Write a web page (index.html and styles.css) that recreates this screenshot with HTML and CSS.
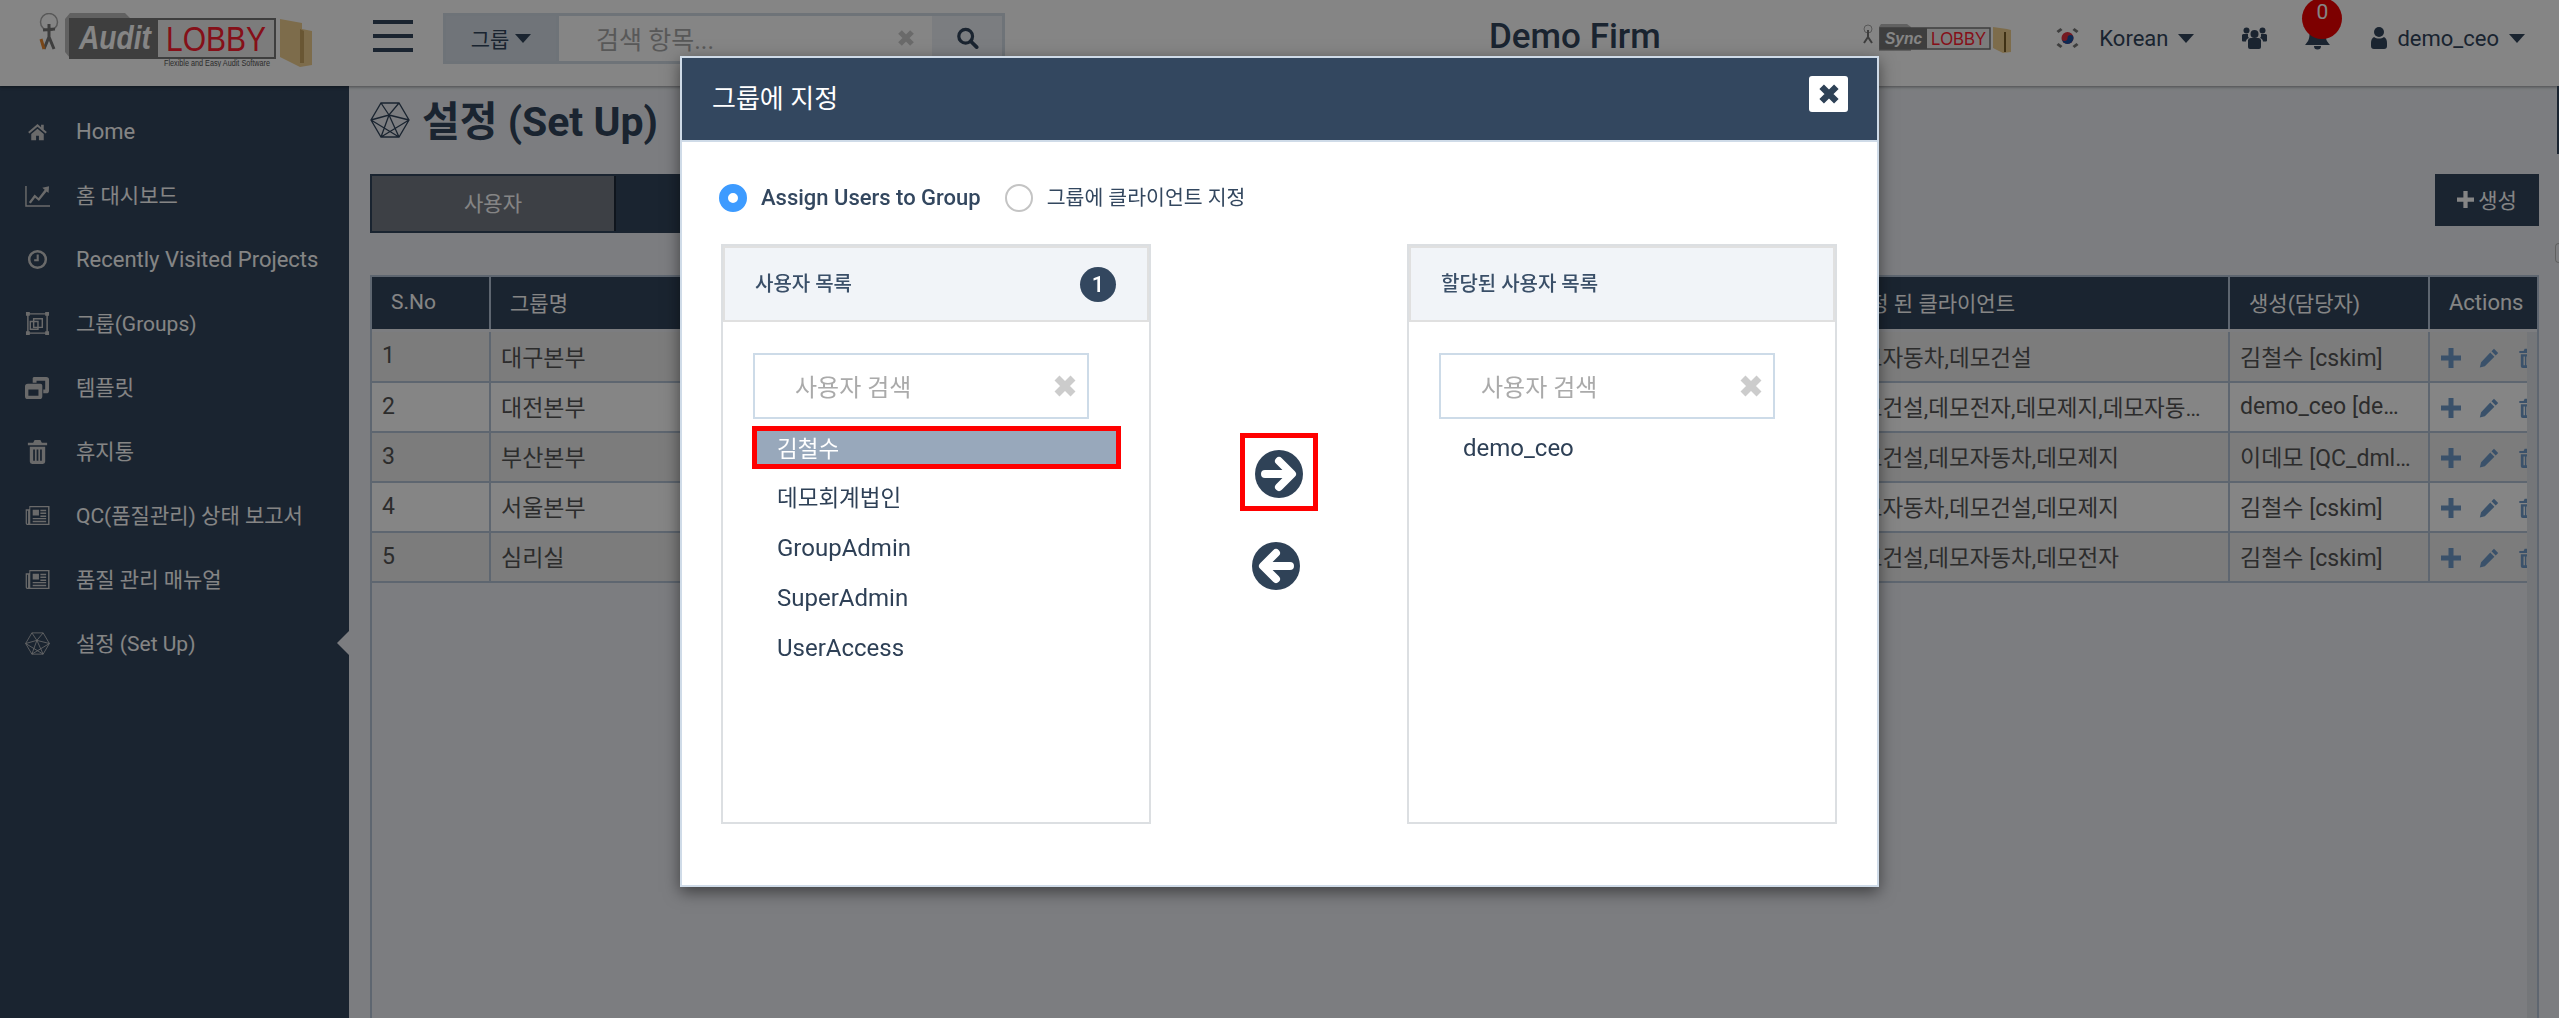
FILE: index.html
```html
<!DOCTYPE html>
<html lang="ko">
<head>
  <meta charset="UTF-8">
  <meta name="viewport" content="width=device-width, initial-scale=1.0">
  <title>Audit Lobby - 설정 (Set Up)</title>
  <link rel="stylesheet" href="styles.css">
</head>
<body>
  <svg class="icon-defs" aria-hidden="true">
    <symbol id="i-home" viewBox="-3 -3 30 30"><path d="M12 3 .8 12.6l1.5 1.7L12 6.2l9.7 8.1 1.5-1.7L19.500 9.500V4h-3.200v2.800zM4.500 15v7.500h5.800V17h3.400v5.500h5.800V15L12 8.800z"/></symbol>
    <symbol id="i-chart" viewBox="0 0 26 26"><path d="M1 3v21h25M1 24" fill="none" stroke="currentColor" stroke-width="1.500"/><path d="M4 20l6-8 4 3.500 6.500-8.500-2.500-2 7-1.500-.5 7-2-1.700-8 10-4-3.500-4.500 6z"/></symbol>
    <symbol id="i-clock" viewBox="-3 -3 30 30"><circle cx="12" cy="12" r="10" fill="none" stroke="currentColor" stroke-width="3"/><path d="M11 6h2.500v8H8v-2.400h3z"/></symbol>
    <symbol id="i-groups" viewBox="0 0 26 26" ><path d="M3 3h20v20H3zM9 8h9v9H9zM5.500 11h8v8h-8z" fill="none" stroke="currentColor" stroke-width="1.500"/><path d="M1 1h4v4H1zM21 1h4v4h-4zM1 21h4v4H1zM21 21h4v4h-4z"/></symbol>
    <symbol id="i-template" viewBox="0 0 26 26"><path d="M9 2h13a3 3 0 0 1 3 3v11a3 3 0 0 1-3 3h-3v-4h2V6H12v2H8V3zM3 9h13a2 2 0 0 1 2 2v11a3 3 0 0 1-3 3H3a3 3 0 0 1-3-3V12a3 3 0 0 1 3-3zm.500 6v6.500H14V15z"/></symbol>
    <symbol id="i-trash" viewBox="0 0 22 26"><path d="M8 1h6l1.500 3H21v2.500H1V4h5.500zM3 8h16v15.500a2.500 2.500 0 0 1-2.500 2.500h-11A2.500 2.500 0 0 1 3 23.500zm3.500 3v11.500h1.800V11zm3.600 0v11.500h1.800V11zm3.600 0v11.500h1.800V11z"/></symbol>
    <symbol id="i-news" viewBox="0 0 26 22"><path d="M4.500 1h21v20H2.500A2 2 0 0 1 .7 19V4.500h3.800zM2 6v13c0 .7 1.200.7 1.200 0V6zm3.500-3.500V19.500H24V2.500z"/><path d="M8 5h6.500v6H8zM16 5h6v1.500h-6zM16 8h6v1.500h-6zM16 11h6v1.500h-6zM8 13.500h14V15H8zM8 16.500h14V18H8z"/></symbol>
    <symbol id="i-hex" viewBox="0 0 40 36"><path d="M11 1h18l10 17-10 17H11L1 18zM11 1l8 12 10-12M1 18l18-5 20 5M19 13l10 22M19 13 11 35M1 18l28 17M39 18 11 35" fill="none" stroke="currentColor" stroke-width="1.300"/></symbol>
    <symbol id="i-x" viewBox="0 0 24 24"><path d="M4 4l16 16M20 4 4 20" fill="none" stroke="currentColor" stroke-width="7"/></symbol>
    <symbol id="i-plus" viewBox="0 0 20 20"><path d="M7.500 0h5v7.500H20v5h-7.500V20h-5v-7.500H0v-5h7.500z"/></symbol>
    <symbol id="i-pencil" viewBox="0 0 24 24"><path d="M18 1l5 5-3 3-5-5zM13.500 5.500l5 5L7 22l-6 1.500L2.500 17z"/></symbol>
    <symbol id="i-right" viewBox="0 0 48 48"><circle cx="24" cy="24" r="24"/><path d="M10 24h25M24 11l13 13-13 13" fill="none" stroke="#fff" stroke-width="8" stroke-linejoin="round" stroke-linecap="round"/></symbol>
    <symbol id="i-left" viewBox="0 0 48 48"><circle cx="24" cy="24" r="24"/><path d="M38 24H13M24 11 11 24l13 13" fill="none" stroke="#fff" stroke-width="8" stroke-linejoin="round" stroke-linecap="round"/></symbol>
  </svg>

  <div class="page">
    <header class="topbar">
      <svg class="logo" viewBox="0 0 276 54">
        <circle cx="13" cy="9" r="8.500" fill="none" stroke="#aaa" stroke-width="1.500"/>
        <path d="M13 11v13M8 36l5-12 5 12M7 17l12-1" fill="none" stroke="#777" stroke-width="3"/>
        <path d="M8 36 5 26" stroke="#e8862c" stroke-width="3"/>
        <path d="M29 6 34 0h55l6 6zM29 6l5 0v39l-5-6z" fill="#bbb"/>
        <rect x="34" y="6" width="205" height="39" fill="#eee" stroke="#777" stroke-width="2"/>
        <rect x="34" y="6" width="88" height="39" fill="#777"/>
        <text class="logo-audit" x="43" y="36" textLength="72" lengthAdjust="spacingAndGlyphs">Audit</text>
        <text class="logo-lobby" x="130" y="38" textLength="100" lengthAdjust="spacingAndGlyphs">LOBBY</text>
        <text class="logo-tag" x="128" y="53" textLength="106" lengthAdjust="spacingAndGlyphs">Flexible and Easy Audit Software</text>
        <path d="M244 6l22 4v6l10 2v34l-12 2-20-10z" fill="#f0d090"/>
        <path d="M264 16v34h4V18z" fill="#c9a662"/>
      </svg>
      <div class="hamburger"><span></span><span></span><span></span></div>
      <div class="top-search">
        <div class="top-search-type">그룹<span class="caret"></span></div>
        <div class="top-search-input">검색 항목...<svg class="top-search-clear"><use href="#i-x"/></svg></div>
        <div class="top-search-btn">
          <svg class="top-search-icon" viewBox="0 0 24 24"><circle cx="10" cy="10" r="7.500" fill="none" stroke="currentColor" stroke-width="3.500"/><path d="M15.500 15.500 22 22" stroke="currentColor" stroke-width="4" stroke-linecap="round"/></svg>
        </div>
      </div>
      <div class="firm-name">Demo Firm</div>
      <svg class="sync-logo" viewBox="0 0 149 29">
        <circle cx="6" cy="5" r="4" fill="none" stroke="#aaa"/>
        <path d="M6 6v8M2 19l4-6 4 6" fill="none" stroke="#777" stroke-width="2"/>
        <path d="M17 3 19 0h26l4 3v24H17z" fill="#bbb"/>
        <rect x="18" y="4" width="110" height="21" fill="#eee" stroke="#777" stroke-width="1.500"/>
        <rect x="18" y="4" width="47" height="21" fill="#777"/>
        <text class="sync-word" x="23" y="20" textLength="37" lengthAdjust="spacingAndGlyphs">Sync</text>
        <text class="sync-lobby" x="69" y="21" textLength="55" lengthAdjust="spacingAndGlyphs">LOBBY</text>
        <path d="M131 3l14 2 4 1v22l-8 1-10-5z" fill="#f0d090"/>
        <path d="M142 8v20h2V8z" fill="#7a5f2a"/>
      </svg>
      <svg class="flag" viewBox="0 0 26 22">
        <circle cx="13" cy="11" r="6" fill="#e03040"/>
        <path d="M7 11a6 6 0 0 0 12 0 3 3 0 0 0-6 0 3 3 0 0 1-6 0z" fill="#1a4fa0"/>
        <path d="M2 4l4-3 2 2-4 3zM24 4l-4-3-2 2 4 3zM2 18l4 3 2-2-4-3zM24 18l-4 3-2-2 4-3z" fill="#777"/>
      </svg>
      <div class="top-link lang">Korean<span class="caret"></span></div>
      <svg class="top-icon users" viewBox="0 0 25 22"><circle cx="12.500" cy="7" r="4"/><circle cx="4.500" cy="3.500" r="3"/><circle cx="20.500" cy="3.500" r="3"/><path d="M6 13a3 3 0 0 1 3-2h7a3 3 0 0 1 3 2v7a2 2 0 0 1-2 2H8a2 2 0 0 1-2-2zM0 8a2 2 0 0 1 2-1h4v2c0 1 .5 1.500 1 2-1.500.5-3 1.500-3 3.500H1a1 1 0 0 1-1-1zM25 8a2 2 0 0 0-2-1h-4v2c0 1-.5 1.500-1 2 1.500.5 3 1.500 3 3.500h3a1 1 0 0 0 1-1z"/></svg>
      <div class="bell-wrap">
        <svg class="top-icon bell" viewBox="0 0 25 24"><path d="M12.500 0a8 8 0 0 1 8 8c0 6 2 8 4.500 11H0c2.500-3 4.500-5 4.500-11a8 8 0 0 1 8-8zM9 20h7a3.500 3.500 0 0 1-7 0z"/></svg>
        <span class="bell-badge">0</span>
      </div>
      <svg class="top-icon account-icon" viewBox="0 0 16 22"><circle cx="8" cy="5" r="5"/><path d="M3 10c3 2 7 2 10 0 2 1 3 3 3 6v3a3 3 0 0 1-3 3H3a3 3 0 0 1-3-3v-3c0-3 1-5 3-6z"/></svg>
      <div class="top-link account">demo_ceo<span class="caret"></span></div>
    </header>

    <div class="main">
      <nav class="sidebar">
        <a class="nav-item latin"><svg class="nav-icon"><use href="#i-home"/></svg>Home</a>
        <a class="nav-item"><svg class="nav-icon"><use href="#i-chart"/></svg>홈 대시보드</a>
        <a class="nav-item latin"><svg class="nav-icon"><use href="#i-clock"/></svg>Recently Visited Projects</a>
        <a class="nav-item"><svg class="nav-icon"><use href="#i-groups"/></svg>그룹(Groups)</a>
        <a class="nav-item"><svg class="nav-icon"><use href="#i-template"/></svg>템플릿</a>
        <a class="nav-item"><svg class="nav-icon nav-icon-trash"><use href="#i-trash"/></svg>휴지통</a>
        <a class="nav-item"><svg class="nav-icon"><use href="#i-news"/></svg>QC(품질관리) 상태 보고서</a>
        <a class="nav-item"><svg class="nav-icon"><use href="#i-news"/></svg>품질 관리 매뉴얼</a>
        <a class="nav-item active"><svg class="nav-icon"><use href="#i-hex"/></svg>설정 (Set Up)</a>
      </nav>

      <main class="content">
        <h1 class="page-title"><svg class="page-title-icon"><use href="#i-hex"/></svg>설정 (Set Up)</h1>
        <div class="toolbar">
          <div class="tabs">
            <div class="tab">사용자</div>
            <div class="tab tab-active">그룹</div>
          </div>
          <button class="create-btn"><svg class="create-icon"><use href="#i-plus"/></svg>생성</button>
        </div>

        <div class="grid">
          <table class="grid-table grid-head">
            <colgroup><col class="c-no"><col class="c-name"><col class="c-client"><col class="c-owner"><col class="c-actions-head"></colgroup>
            <tr><th>S.No</th><th>그룹명</th><th>지정 된 클라이언트</th><th>생성(담당자)</th><th>Actions</th></tr>
          </table>
          <div class="grid-scroll">
            <table class="grid-table grid-body">
              <colgroup><col class="c-no"><col class="c-name"><col class="c-client"><col class="c-owner"><col class="c-actions"></colgroup>
              <tr><td>1</td><td>대구본부</td><td class="clients">데모자동차,데모건설</td><td>김철수 [cskim]</td><td class="acts"><svg class="act"><use href="#i-plus"/></svg><svg class="act"><use href="#i-pencil"/></svg><svg class="act"><use href="#i-trash"/></svg></td></tr>
              <tr><td>2</td><td>대전본부</td><td class="clients">데모건설,데모전자,데모제지,데모자동차,데모회계</td><td>demo_ceo [demo_ceo]</td><td class="acts"><svg class="act"><use href="#i-plus"/></svg><svg class="act"><use href="#i-pencil"/></svg><svg class="act"><use href="#i-trash"/></svg></td></tr>
              <tr><td>3</td><td>부산본부</td><td class="clients">데모건설,데모자동차,데모제지</td><td>이데모 [QC_dmlee]</td><td class="acts"><svg class="act"><use href="#i-plus"/></svg><svg class="act"><use href="#i-pencil"/></svg><svg class="act"><use href="#i-trash"/></svg></td></tr>
              <tr><td>4</td><td>서울본부</td><td class="clients">데모자동차,데모건설,데모제지</td><td>김철수 [cskim]</td><td class="acts"><svg class="act"><use href="#i-plus"/></svg><svg class="act"><use href="#i-pencil"/></svg><svg class="act"><use href="#i-trash"/></svg></td></tr>
              <tr><td>5</td><td>심리실</td><td class="clients">데모건설,데모자동차,데모전자</td><td>김철수 [cskim]</td><td class="acts"><svg class="act"><use href="#i-plus"/></svg><svg class="act"><use href="#i-pencil"/></svg><svg class="act"><use href="#i-trash"/></svg></td></tr>
            </table>
            <div class="grid-track"></div>
          </div>
        </div>
      </main>
    </div>
    <div class="edge-bar"></div>
    <div class="edge-dot"></div>
  </div>

  <div class="backdrop"></div>

  <section class="modal">
    <div class="modal-header">
      <h2 class="modal-title">그룹에 지정</h2>
      <button class="modal-close"><svg class="modal-close-icon"><use href="#i-x"/></svg></button>
    </div>
    <div class="modal-body">
      <div class="radio-row">
        <span class="radio radio-on"></span><span class="radio-label radio-label-on">Assign Users to Group</span>
        <span class="radio"></span><span class="radio-label">그룹에 클라이언트 지정</span>
      </div>
      <div class="assign">
        <div class="panel">
          <div class="panel-head">사용자 목록<span class="panel-badge">1</span></div>
          <div class="panel-body">
            <div class="panel-search">사용자 검색<svg class="panel-clear"><use href="#i-x"/></svg></div>
            <ul class="user-list">
              <li class="user selected">김철수</li>
              <li class="user">데모회계법인</li>
              <li class="user latin">GroupAdmin</li>
              <li class="user latin">SuperAdmin</li>
              <li class="user latin">UserAccess</li>
            </ul>
          </div>
        </div>
        <div class="arrows">
          <div class="arrow-box"><svg class="arrow"><use href="#i-right"/></svg></div>
          <svg class="arrow arrow-back"><use href="#i-left"/></svg>
        </div>
        <div class="panel">
          <div class="panel-head">할당된 사용자 목록</div>
          <div class="panel-body">
            <div class="panel-search">사용자 검색<svg class="panel-clear"><use href="#i-x"/></svg></div>
            <ul class="user-list">
              <li class="user latin">demo_ceo</li>
            </ul>
          </div>
        </div>
      </div>
    </div>
  </section>
</body>
</html>
```

FILE: styles.css
```css
* {
  box-sizing: border-box;
}

html, body {
  margin: 0;
  padding: 0;
  height: 100%;
  overflow: hidden;
  font-family: Roboto, "Noto Sans CJK KR", sans-serif;
  font-size: 21px;
  color: #555;
}

.icon-defs {
  display: none;
}

.page {
  display: flex;
  flex-direction: column;
  height: 100vh;
  background: #edf0f5;
}

/* top bar */
.topbar {
  display: flex;
  align-items: center;
  flex: none;
  height: 86px;
  padding: 0 34px 10px 0;
  background: #fff;
  box-shadow: 0 1px 3px rgba(0,0,0,0.4);
  position: relative;
}

.logo {
  flex: none;
  width: 276px;
  height: 54px;
  margin: 4px 0 0 36px;
}

.logo-audit {
  font: italic bold 33px "Liberation Sans", sans-serif;
  fill: #fff;
}

.logo-lobby {
  font: 35px "Liberation Sans", sans-serif;
  fill: #ff2030;
}

.logo-tag {
  font: 8.500px "Liberation Sans", sans-serif;
  fill: #555;
}

.hamburger {
  display: flex;
  flex-direction: column;
  gap: 10px;
  width: 40px;
  margin: -4px 0 0 61px;
}

.hamburger span {
  height: 4px;
  background: #32455c;
}

.top-search {
  display: flex;
  width: 562px;
  height: 51px;
  margin-left: 30px;
  border: 3px solid #d3dde7;
}

.top-search-type {
  display: flex;
  align-items: center;
  justify-content: center;
  width: 110px;
  background: #d6dfe8;
  font-size: 21px;
  color: #32455c;
}

.top-search-input {
  display: flex;
  align-items: center;
  justify-content: space-between;
  flex: 1;
  padding: 0 17px 0 37px;
  border-left: 3px solid #d3dde7;
  font-size: 25px;
  color: #aaa;
}

.top-search-clear {
  width: 18px;
  height: 18px;
  color: #ccc;
}

.top-search-btn {
  display: flex;
  align-items: center;
  justify-content: center;
  width: 70px;
  background: #ecf0f5;
}

.top-search-icon {
  width: 23px;
  height: 22px;
  color: #32455c;
}

.caret {
  display: inline-block;
  margin-left: 6px;
  border-left: 8px solid transparent;
  border-right: 8px solid transparent;
  border-top: 9px solid currentColor;
}

.firm-name {
  margin: -4px 0 0 484px;
  font-size: 35px;
  font-weight: 500;
  color: #32455c;
}

.sync-logo {
  flex: none;
  width: 149px;
  height: 29px;
  margin: 0 0 0 auto;
}

.sync-word {
  font: italic bold 17px "Liberation Sans", sans-serif;
  fill: #fff;
}

.sync-lobby {
  font: 18px "Liberation Sans", sans-serif;
  fill: #ff2030;
}

.flag {
  flex: none;
  width: 27px;
  height: 22px;
  margin-left: 43px;
}

.top-link {
  display: flex;
  align-items: center;
  font-size: 22px;
  color: #32455c;
}

.top-link .caret {
  margin-left: 10px;
}

.lang {
  margin-left: 18px;
}

.top-icon {
  flex: none;
  fill: #32455c;
}

.users {
  width: 25px;
  height: 22px;
  margin-left: 48px;
}

.bell-wrap {
  position: relative;
  width: 25px;
  height: 24px;
  margin-left: 38px;
}

.bell {
  display: block;
  width: 25px;
  height: 24px;
}

.bell-badge {
  position: absolute;
  left: -3px;
  top: -28px;
  width: 40px;
  height: 41px;
  padding-top: 2px;
  border-radius: 50%;
  background: #f00000;
  color: #fff;
  font-size: 21px;
  text-align: center;
}

.account-icon {
  width: 16px;
  height: 22px;
  margin-left: 41px;
}

.account {
  margin-left: 10px;
}

/* body */
.main {
  display: flex;
  flex: 1;
  min-height: 0;
}

.sidebar {
  flex: none;
  width: 349px;
  padding-top: 13px;
  background: #32455c;
}

.nav-item {
  display: flex;
  align-items: center;
  position: relative;
  height: 64px;
  padding: 0 0 3px 25px;
  color: #fff;
  font-size: 21px;
}

.nav-item.latin {
  padding-bottom: 0;
  font-size: 22px;
}

.nav-icon {
  flex: none;
  width: 25px;
  height: 25px;
  margin: 3px 26px 0 0;
  fill: #ccc;
  color: #ccc;
}

.latin .nav-icon {
  margin-top: 0;
}

.nav-item.active::after {
  content: "";
  position: absolute;
  right: 0;
  top: 20px;
  border-top: 12px solid transparent;
  border-bottom: 12px solid transparent;
  border-right: 12px solid #edf0f5;
}

.content {
  display: flex;
  flex-direction: column;
  flex: 1;
  min-width: 0;
  padding: 0 20px 0 21px;
}

.page-title {
  display: flex;
  align-items: center;
  height: 72px;
  margin: -4px 0 20px;
  font-size: 41px;
  font-weight: 700;
  color: #32455c;
}

.page-title-icon {
  flex: none;
  width: 40px;
  height: 36px;
  margin: 4px 12px 0 0;
  color: #32455c;
}

.toolbar {
  display: flex;
  justify-content: space-between;
  align-items: flex-start;
  flex: none;
  height: 101px;
}

.tabs {
  display: flex;
  height: 59px;
  border: 2px solid #32455c;
}

.tab {
  display: flex;
  align-items: center;
  justify-content: center;
  width: 242px;
  padding-bottom: 3px;
  background: #767b85;
  color: #fff;
  font-size: 21px;
}

.tab-active {
  width: 244px;
  border-left: 2px solid #1e2a38;
  background: #32455c;
}

.create-btn {
  display: flex;
  align-items: center;
  justify-content: center;
  width: 104px;
  height: 52px;
  padding: 0 0 2px;
  border: none;
  background: #32455c;
  color: #fff;
  font: 21px Roboto, "Noto Sans CJK KR", sans-serif;
}

.create-icon {
  width: 17px;
  height: 17px;
  margin-right: 4px;
  fill: #fff;
}

/* table */
.grid {
  display: flex;
  flex-direction: column;
  flex: 1;
  min-height: 0;
  overflow: hidden;
  border: 2px solid #b4c4d6;
  border-bottom: none;
}

.grid-table {
  table-layout: fixed;
  border-collapse: collapse;
}

.grid-head {
  flex: none;
  width: 2165px;
}

.grid-head th {
  height: 52px;
  padding: 0 0 2px 19px;
  border-right: 2px solid #b4c4d6;
  background: #32455c;
  color: #fff;
  font-size: 21px;
  font-weight: 400;
  text-align: left;
}

.grid-head th:last-child {
  border-right: none;
  font-size: 22px;
}

.c-no { width: 118px; }
.c-name { width: 1340px; }
.c-client { width: 399px; }
.c-owner { width: 200px; }
.c-actions-head { width: 108px; }
.c-actions { width: 98px; }

.grid-scroll {
  display: flex;
  flex: 1;
  min-height: 0;
  align-items: flex-start;
  padding-top: 3px;
}

.grid-body {
  flex: none;
  width: 2155px;
}

.grid-body td {
  height: 50px;
  padding: 0 12px 2px 10px;
  overflow: hidden;
  white-space: nowrap;
  text-overflow: ellipsis;
  border-right: 2px solid #b4c4d6;
  border-bottom: 2px solid #b4c4d6;
  background: #fff;
  color: #555;
  font-size: 23px;
}

.grid-body td.clients {
  padding-right: 25px;
  font-size: 22.500px;
}

.grid-body tr:nth-child(odd) td {
  background: #ededed;
}

.grid-body td:last-child {
  border-right: none;
}

.grid-body td.acts {
  padding: 0 0 0 11px;
  text-overflow: clip;
}

.act {
  width: 20px;
  height: 20px;
  margin-right: 18px;
  vertical-align: middle;
  fill: #6f9ccc;
}

.grid-track {
  flex: 1;
  align-self: stretch;
  background: #dfe3e9;
}

.edge-bar {
  position: absolute;
  right: 0;
  top: 86px;
  width: 2px;
  height: 68px;
  background: #32455c;
}

.edge-dot {
  position: absolute;
  left: 2555px;
  top: 243px;
  width: 4px;
  height: 20px;
  border: 1px solid #bbb;
  border-right: none;
  border-radius: 4px 0 0 4px;
}

/* modal */
.backdrop {
  position: fixed;
  inset: 0;
  background: rgba(0,0,0,0.48);
}

.modal {
  position: absolute;
  left: 680px;
  top: 56px;
  width: 1199px;
  height: 831px;
  border: 2px solid #cfdbe8;
  background: #fff;
  box-shadow: 0 5px 15px rgba(0,0,0,0.5);
}

.modal-header {
  display: flex;
  align-items: center;
  justify-content: space-between;
  height: 84px;
  padding: 0 29px 0 30px;
  border-bottom: 2px solid #cfdbe8;
  background: #33475f;
}

.modal-title {
  margin: -5px 0 0;
  color: #fff;
  font-size: 26px;
  font-weight: 400;
}

.modal-close {
  display: flex;
  align-items: center;
  justify-content: center;
  width: 39px;
  height: 36px;
  margin-top: -11px;
  padding: 0;
  border: none;
  border-radius: 3px;
  background: #fff;
}

.modal-close-icon {
  width: 22px;
  height: 22px;
  color: #2f4257;
}

.modal-body {
  padding: 42px 39px 0;
}

.radio-row {
  display: flex;
  align-items: center;
  height: 28px;
  margin-left: -2px;
}

.radio {
  flex: none;
  width: 28px;
  height: 28px;
  border: 2px solid #c4c4c4;
  border-radius: 50%;
  background: #fff;
}

.radio-on {
  border: 9px solid #3d9bff;
}

.radio-label {
  margin: -5px 0 0 14px;
  font-size: 20.500px;
  color: #33475f;
}

.radio-label-on {
  margin-top: -2px;
  margin-right: 24px;
  font-size: 22px;
  font-weight: 500;
}

.assign {
  display: flex;
  margin-top: 32px;
}

.panel {
  display: flex;
  flex-direction: column;
  flex: none;
  width: 430px;
  height: 580px;
  border: 2px solid #dcdfe2;
}

.panel-head {
  display: flex;
  align-items: center;
  justify-content: space-between;
  flex: none;
  height: 76px;
  padding: 0 30px 4px 30px;
  border: 2px solid #e0e0e0;
  background: #f1f4f8;
  font-size: 20px;
  font-weight: 500;
  color: #3a4f68;
}

.panel-badge {
  display: flex;
  align-items: center;
  justify-content: center;
  width: 36px;
  height: 35px;
  margin: 4px 1px 0 0;
  border-radius: 50%;
  background: #33475f;
  color: #fff;
  font-size: 22px;
}

.panel-body {
  padding: 31px 0 0 30px;
}

.panel-search {
  display: flex;
  align-items: center;
  justify-content: space-between;
  width: 336px;
  height: 66px;
  padding: 0 10px 2px 40px;
  border: 2px solid #cddbe8;
  font-size: 24px;
  color: #aaa;
}

.panel-clear {
  width: 24px;
  height: 24px;
  margin-top: 2px;
  color: #ccc;
}

.user-list {
  margin: 7px 0 0;
  padding: 0;
  list-style: none;
}

.user {
  display: flex;
  align-items: center;
  width: 369px;
  height: 43px;
  margin: 0 0 7px -1px;
  padding: 0 0 3px 20px;
  border: 5px solid transparent;
  font-size: 22.500px;
  color: #2e4056;
}

.user.latin {
  padding: 1px 0 0 20px;
  font-size: 24px;
}

.selected {
  padding-bottom: 1px;
  border-color: #f00;
  background: #98a8bb;
  color: #fff;
}

.arrows {
  display: flex;
  flex-direction: column;
  align-items: center;
  flex: none;
  width: 256px;
  padding-top: 189px;
}

.arrow-box {
  display: flex;
  align-items: center;
  justify-content: center;
  width: 78px;
  height: 78px;
  padding-top: 4px;
  border: 5px solid #f00;
}

.arrow {
  width: 48px;
  height: 48px;
  fill: #2f4257;
}

.arrow-back {
  margin: 31px 6px 0 0;
}
```
